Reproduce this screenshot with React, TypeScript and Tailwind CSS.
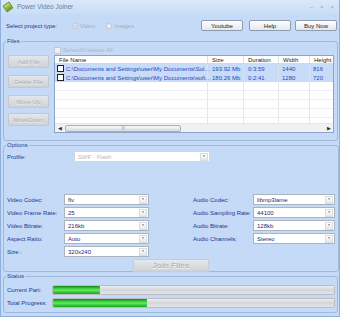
import React from "react";

const rows = [
  { name: "C:\\Documents and Settings\\user\\My Documents\\Sol…", size: "193.92 Mb", dur: "0:3:59", w: "1440", h: "816" },
  { name: "C:\\Documents and Settings\\user\\My Documents\\soft…", size: "180.26 Mb", dur: "0:2:41", w: "1280", h: "720" },
];

function Btn({ label, className = "" }: { label: string; className?: string }) {
  return (
    <div className={`flex items-center justify-center h-[11px] border border-[#8e9cb0] rounded-[2px] bg-gradient-to-b from-white to-[#e2e7ef] text-[6px] leading-none text-[#1a1a1a] ${className}`}>
      {label}
    </div>
  );
}

function GrayBtn({ label, className = "" }: { label: string; className?: string }) {
  return (
    <div className={`flex items-center justify-center border border-[#c4c8ce] rounded-[1px] bg-gradient-to-b from-[#e4e6e9] to-[#cfd2d6] text-[6px] leading-none text-[#a9acb0] [text-shadow:0_1px_0_#f4f4f4] ${className}`}>
      {label}
    </div>
  );
}

function Combo({ value, className = "", disabled }: { value: string; className?: string; disabled?: boolean }) {
  return (
    <div className={`flex items-center bg-white border border-[#aab3c0] ${className}`}>
      <span className={`flex-1 pl-[3px] text-[6px] leading-none ${disabled ? "text-[#b8b8b8]" : "text-[#1d2a78]"}`}>{value}</span>
      <span className="w-[8px] h-[8px] mr-[1px] border border-[#d8dde5] bg-gradient-to-b from-white to-[#e4e8ee] flex items-center justify-center text-[3px] text-[#666]">▼</span>
    </div>
  );
}

function Legend({ text }: { text: string }) {
  return <legend className="ml-[2px] px-[1px] text-[6px] leading-[8px] text-[#2a3f8f]">{text}</legend>;
}

const col = ["w-[153px]", "w-[36px]", "w-[35px]", "w-[31px]", "flex-1"];

export default function App() {
  const lab = "text-[6px] leading-none text-[#1f3594]";
  return (
    <div className="w-[340px] h-[317px] overflow-hidden bg-[#c4daf6] border-x border-b border-[#8fb0dc] font-['Liberation_Sans',Arial,sans-serif]">
      {/* title bar */}
      <div className="h-[14px] flex items-center bg-gradient-to-b from-[#dbe8f9] to-[#c9ddf6]">
        <div className="ml-[3px] w-[8px] h-[8px] rotate-[-35deg] rounded-[1px] bg-gradient-to-b from-[#c6e35a] to-[#5d9a22] border border-[#6c8a30]" />
        <span className="ml-[5px] text-[6.5px] leading-none text-[#6d7f96]">Power Video Joiner</span>
        <div className="ml-auto mr-[5px] flex items-center gap-[7px] text-[6px] leading-none text-[#9aa6b5]">
          <span>–</span>
          <span>=</span>
          <span>×</span>
        </div>
      </div>

      {/* project type */}
      <div className="h-[23px] flex items-center pl-[5px] pr-[2px]">
        <span className={lab}>Select project type:</span>
        <div className="ml-[15px] flex items-center gap-[2px]">
          <span className="w-[6px] h-[6px] rounded-full border border-[#c0c4ca] bg-[#eef0f3] flex items-center justify-center">
            <span className="w-[2px] h-[2px] rounded-full bg-[#b8bcc2]" />
          </span>
          <span className="text-[6px] leading-none text-[#a8adb5]">Video</span>
        </div>
        <div className="ml-[11px] flex items-center gap-[2px]">
          <span className="w-[6px] h-[6px] rounded-full border border-[#c0c4ca] bg-[#eef0f3]" />
          <span className="text-[6px] leading-none text-[#a8adb5]">Images</span>
        </div>
        <div className="ml-auto flex items-center">
          <Btn label="Youtube" className="w-[42px] h-[11px]" />
          <Btn label="Help" className="ml-[6px] w-[42px] h-[11px]" />
          <Btn label="Buy Now" className="ml-[4px] w-[42px] h-[11px]" />
        </div>
      </div>

      {/* Files */}
      <fieldset className="ml-[2px] w-[335px] h-[104px] border border-[#9fb9dc] rounded-[3px]">
        <Legend text="Files" />
        <div className="flex">
          <div className="ml-[4px] w-[41px] pt-[10px] flex flex-col">
            <GrayBtn label="Add File" className="h-[13px]" />
            <GrayBtn label="Delete File" className="h-[13px] mt-[7px]" />
            <GrayBtn label="Move Up" className="h-[13px] mt-[7px]" />
            <GrayBtn label="MoveDown" className="h-[13px] mt-[5px]" />
          </div>
          <div className="ml-[5px] w-[280px]">
            <div className="h-[10px] flex items-center gap-[2px]">
              <span className="w-[7px] h-[7px] border border-[#c3c8cf] bg-[#eef0f3]" />
              <span className="text-[6px] leading-none text-[#b0b5bc]">Select/Unselect All</span>
            </div>
            <div className="h-[78px] border border-[#8aa3c6] bg-white flex flex-col">
              <div className="h-[8px] flex border-b border-[#d5d9df] bg-white text-[6px] leading-none text-[#222]">
                {["File Name", "Size", "Duration", "Width", "Height"].map((h, i) => (
                  <div key={h} className={`${col[i]} ${i < 4 ? "border-r border-[#dde1e6]" : ""} flex items-center pl-[4px]`}>
                    {h}
                  </div>
                ))}
              </div>
              <div className="flex-1 overflow-hidden">
                {rows.map((r) => (
                  <div key={r.size} className="h-[9px] flex bg-[#c9dcf7] text-[6px] leading-none text-[#2447c4]">
                    <div className={`${col[0]} border-r border-[#dfe4ea] flex items-center pl-[2px] gap-[2px] whitespace-nowrap`}>
                      <span className="shrink-0 w-[7px] h-[7px] border border-[#222] bg-white" />
                      <span>{r.name}</span>
                    </div>
                    <div className={`${col[1]} border-r border-[#dfe4ea] flex items-center pl-[4px]`}>{r.size}</div>
                    <div className={`${col[2]} border-r border-[#dfe4ea] flex items-center pl-[4px]`}>{r.dur}</div>
                    <div className={`${col[3]} border-r border-[#dfe4ea] flex items-center pl-[3px]`}>{r.w}</div>
                    <div className={`${col[4]} flex items-center pl-[3px]`}>{r.h}</div>
                  </div>
                ))}
                {[0, 1, 2, 3, 4, 5].map((k) => (
                  <div key={k} className="h-[9px] flex border-b border-[#eceef1]">
                    {col.map((c, i) => (
                      <div key={i} className={`${c} ${i < 4 ? "border-r border-[#e3e6ea]" : ""}`} />
                    ))}
                  </div>
                ))}
              </div>
              <div className="h-[9px] flex items-center bg-[#f0f1f3] border-t border-[#e4e6ea]">
                <span className="w-[9px] text-center text-[5px] leading-none text-[#333]">◀</span>
                <span className="ml-[1px] w-[116px] h-[7px] rounded-[2px] border border-[#a9b0ba] bg-gradient-to-b from-[#f7f8fa] to-[#d6dbe2] flex items-center justify-center text-[4px] leading-none text-[#8a929c]">|||</span>
                <span className="ml-auto w-[9px] text-center text-[5px] leading-none text-[#333]">▶</span>
              </div>
            </div>
          </div>
        </div>
      </fieldset>

      {/* Options */}
      <fieldset className="ml-[2px] w-[335px] h-[131px] border border-[#9fb9dc] rounded-[3px]">
        <Legend text="Options" />
        <div className="pl-[3px]">
          <div className="mt-[2px] flex items-center h-[11px]">
            <span className={`${lab} w-[67px]`}>Profile:</span>
            <Combo value="SWF - Flash" disabled className="w-[136px] h-[11px] border-[#d4d8de]" />
          </div>
          <div className="mt-[32px] flex">
            <div className="w-[145px] flex flex-col gap-[2px]">
              {[
                ["Video Codec:", "flv"],
                ["Video Frame Rate:", "25"],
                ["Video Bitrate:", "216kb"],
                ["Aspect Ratio:", "Auto"],
                ["Size :", "320x240"],
              ].map(([l, v]) => (
                <div key={l} className="h-[11px] flex items-center">
                  <span className={`${lab} w-[57px]`}>{l}</span>
                  <Combo value={v} className="w-[85px] h-[11px]" />
                </div>
              ))}
            </div>
            <div className="ml-[41px] w-[145px] flex flex-col gap-[2px]">
              {[
                ["Audio Codec:", "libmp3lame"],
                ["Audio Sampling Rate:", "44100"],
                ["Audio Bitrate:", "128kb"],
                ["Audio Channels:", "Stereo"],
              ].map(([l, v]) => (
                <div key={l} className="h-[11px] flex items-center">
                  <span className={`${lab} w-[60px]`}>{l}</span>
                  <Combo value={v} className="w-[82px] h-[11px]" />
                </div>
              ))}
            </div>
          </div>
          <div className="mt-[2px] ml-[126px] w-[76px] h-[13px] border border-[#c9ccd1] bg-gradient-to-b from-[#e6e8eb] to-[#cfd2d6] flex items-center justify-center text-[8px] font-bold leading-none text-[#b3b6ba] [text-shadow:0_1px_0_#f6f6f6]">
            Join Files
          </div>
        </div>
      </fieldset>

      {/* Status */}
      <fieldset className="ml-[2px] w-[335px] h-[41px] border border-[#9fb9dc] rounded-[3px]">
        <Legend text="Status" />
        <div className="pl-[3px] pt-[5px] flex flex-col gap-[3px]">
          {[
            ["Current Part:", 47],
            ["Total Progress:", 94],
          ].map(([l, w]) => (
            <div key={l as string} className="h-[10px] flex items-center">
              <span className={`${lab} w-[45px]`}>{l}</span>
              <div className="w-[283px] h-[10px] rounded-[2px] border border-[#b9bdc3] bg-gradient-to-b from-[#eceef0] via-[#d3d6da] to-[#e2e4e7] overflow-hidden">
                <div className="h-full rounded-[1px] bg-gradient-to-b from-[#0f8a12] via-[#5cf25e] to-[#17a21a]" style={{ width: w as number }} />
              </div>
            </div>
          ))}
        </div>
      </fieldset>
    </div>
  );
}
